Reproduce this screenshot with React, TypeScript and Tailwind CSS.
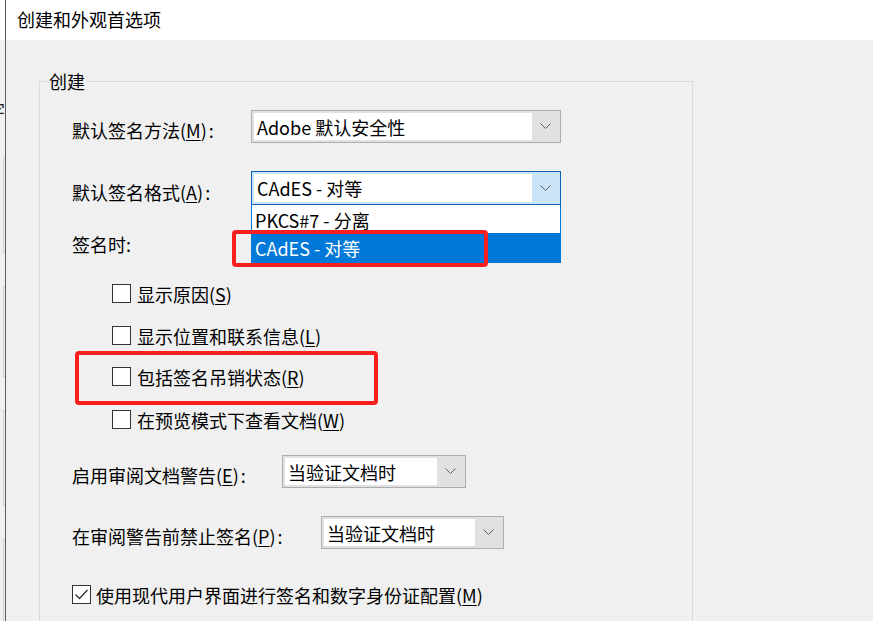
import React from 'react';

const font = "font-['Noto_Sans_CJK_SC','Noto_Sans',sans-serif]";

const Key: React.FC<{ k: string }> = ({ k }) => (
  <>
    (<span className="underline underline-offset-2 decoration-1">{k}</span>)
  </>
);

const Chevron = () => (
  <svg width="11" height="7" viewBox="0 0 11 7" className="block">
    <polyline points="0.5,0.5 5.5,5.5 10.5,0.5" fill="none" stroke="#5f5f5f" strokeWidth="1" />
  </svg>
);

interface ComboProps {
  value: string;
  width: string;
  focused?: boolean;
  children?: React.ReactNode;
}

const Combo: React.FC<ComboProps> = ({ value, width, focused, children }) => (
  <div className={`relative h-full ${width}`}>
    <div
      className={`flex h-full border p-[2px] ${
        focused ? 'border-[#0b64b5] bg-[#cce4f7]' : 'border-[#adadad] bg-[#e1e1e1]'
      }`}
    >
      <div className="flex flex-1 items-center bg-white pl-[3px] text-[18px] leading-none">{value}</div>
      <div className="flex w-[26px] items-center justify-center">
        <Chevron />
      </div>
    </div>
    {children}
  </div>
);

const Check: React.FC<{ checked?: boolean }> = ({ checked }) => (
  <div className="flex h-[19px] w-[19px] shrink-0 items-center justify-center border border-[#333333] bg-white">
    {checked && (
      <svg width="15" height="13" viewBox="0 0 15 13">
        <polyline points="1.5,6.5 5.5,10.5 13.5,2" fill="none" stroke="#333333" strokeWidth="1.4" />
      </svg>
    )}
  </div>
);

const CheckRow: React.FC<{ label: React.ReactNode; mt: string }> = ({ label, mt }) => (
  <div className={`flex h-[19px] items-center pl-[40px] ${mt}`}>
    <Check />
    <span className="ml-[6px] whitespace-nowrap text-[18px] leading-none">{label}</span>
  </div>
);

export default function App() {
  return (
    <div className={`relative flex h-[621px] w-[873px] overflow-hidden bg-[#f0f0f0] text-black ${font}`}>
      {/* left strip of the window behind */}
      <div className="flex w-[5px] shrink-0 flex-col overflow-hidden">
        <div className="h-10 shrink-0 bg-white" />
        <div className="mt-[61px] h-[18px] shrink-0 overflow-hidden whitespace-nowrap text-[18px] leading-[18px] text-[#222]">
          <span className="-ml-[13px] inline-block">字</span>
        </div>
        <div className="ml-[3px] mt-[38px] h-[96px] w-[2px] shrink-0 border-y border-l border-[#d4d4d4]" />
        <div className="ml-[3px] mt-[33px] h-[91px] w-[2px] shrink-0 border-y border-l border-[#d4d4d4]" />
        <div className="ml-[3px] mt-[33px] h-[96px] w-[2px] shrink-0 border-y border-l border-[#d4d4d4]" />
        <div className="ml-[3px] mt-[33px] h-[96px] w-[2px] shrink-0 border-y border-l border-[#d4d4d4]" />
      </div>
      <div className="w-px shrink-0 bg-[#5c5c5c]" />

      <div className="flex min-w-0 flex-1 flex-col">
        <div className="flex h-10 shrink-0 items-center bg-white pb-[3px] pl-[11px] text-[18px] leading-none">
          创建和外观首选项
        </div>

        <div className="shrink-0 pl-[33px] pt-[41px]">
          <div className="relative h-[560px] w-[654px] border border-[#dadada] pl-[32px]">
            <span className="absolute -top-[12px] left-[7px] bg-[#f0f0f0] px-[2px] text-[18px] leading-[22px]">
              创建
            </span>

            {/* default signing method */}
            <div className="mt-[28px] flex h-[33px] items-center">
              <span className="w-[179px] whitespace-nowrap pt-[6px] text-[18px] leading-none">
                默认签名方法<Key k="M" />
                <span className="ml-[2px]">:</span>
              </span>
              <Combo value="Adobe 默认安全性" width="w-[310px]" />
            </div>

            {/* default signing format */}
            <div className="relative z-10 mt-[28px] flex h-[34px] items-center">
              <span className="w-[179px] whitespace-nowrap pt-[8px] text-[18px] leading-none">
                默认签名格式<Key k="A" />
                <span className="ml-[2px]">:</span>
              </span>
              <Combo value="CAdES - 对等" width="w-[310px]" focused>
                <div className="absolute left-0 top-full w-full border-x border-b border-[#0078d7] bg-white text-[18px] leading-none">
                  <div className="flex h-[28px] items-center pl-[3px] pt-[2px]">PKCS#7 - 分离</div>
                  <div className="flex h-[29px] items-center bg-[#0078d7] pl-[3px] text-white">CAdES - 对等</div>
                </div>
              </Combo>
            </div>

            <div className="mt-[28px] flex h-[22px] items-center text-[18px] leading-none">签名时:</div>

            <CheckRow mt="mt-[29px]" label={<>显示原因<Key k="S" /></>} />
            <CheckRow mt="mt-[23px]" label={<>显示位置和联系信息<Key k="L" /></>} />
            <CheckRow mt="mt-[22px]" label={<>包括签名吊销状态<Key k="R" /></>} />
            <CheckRow mt="mt-[24px]" label={<>在预览模式下查看文档<Key k="W" /></>} />

            <div className="mt-[26px] flex h-[33px] items-center">
              <span className="w-[210px] whitespace-nowrap pt-[7px] text-[18px] leading-none">
                启用审阅文档警告<Key k="E" />
                <span className="ml-[2px]">:</span>
              </span>
              <Combo value="当验证文档时" width="w-[184px]" />
            </div>

            <div className="mt-[28px] flex h-[33px] items-center">
              <span className="w-[249px] whitespace-nowrap pt-[7px] text-[18px] leading-none">
                在审阅警告前禁止签名<Key k="P" />
                <span className="ml-[2px]">:</span>
              </span>
              <Combo value="当验证文档时" width="w-[183px]" />
            </div>

            <div className="mt-[36px] flex h-[19px] items-center">
              <Check checked />
              <span className="ml-[5px] whitespace-nowrap text-[18px] leading-none">
                使用现代用户界面进行签名和数字身份证配置<Key k="M" />
              </span>
            </div>
          </div>
        </div>
      </div>

      {/* red annotation boxes */}
      <div className="pointer-events-none absolute left-[232px] top-[230px] z-20 h-[37px] w-[256px] rounded-[4px] border-4 border-[#fa1e1e]" />
      <div className="pointer-events-none absolute left-[75px] top-[351px] z-20 h-[54px] w-[303px] rounded-[4px] border-4 border-[#fa1e1e]" />
    </div>
  );
}
